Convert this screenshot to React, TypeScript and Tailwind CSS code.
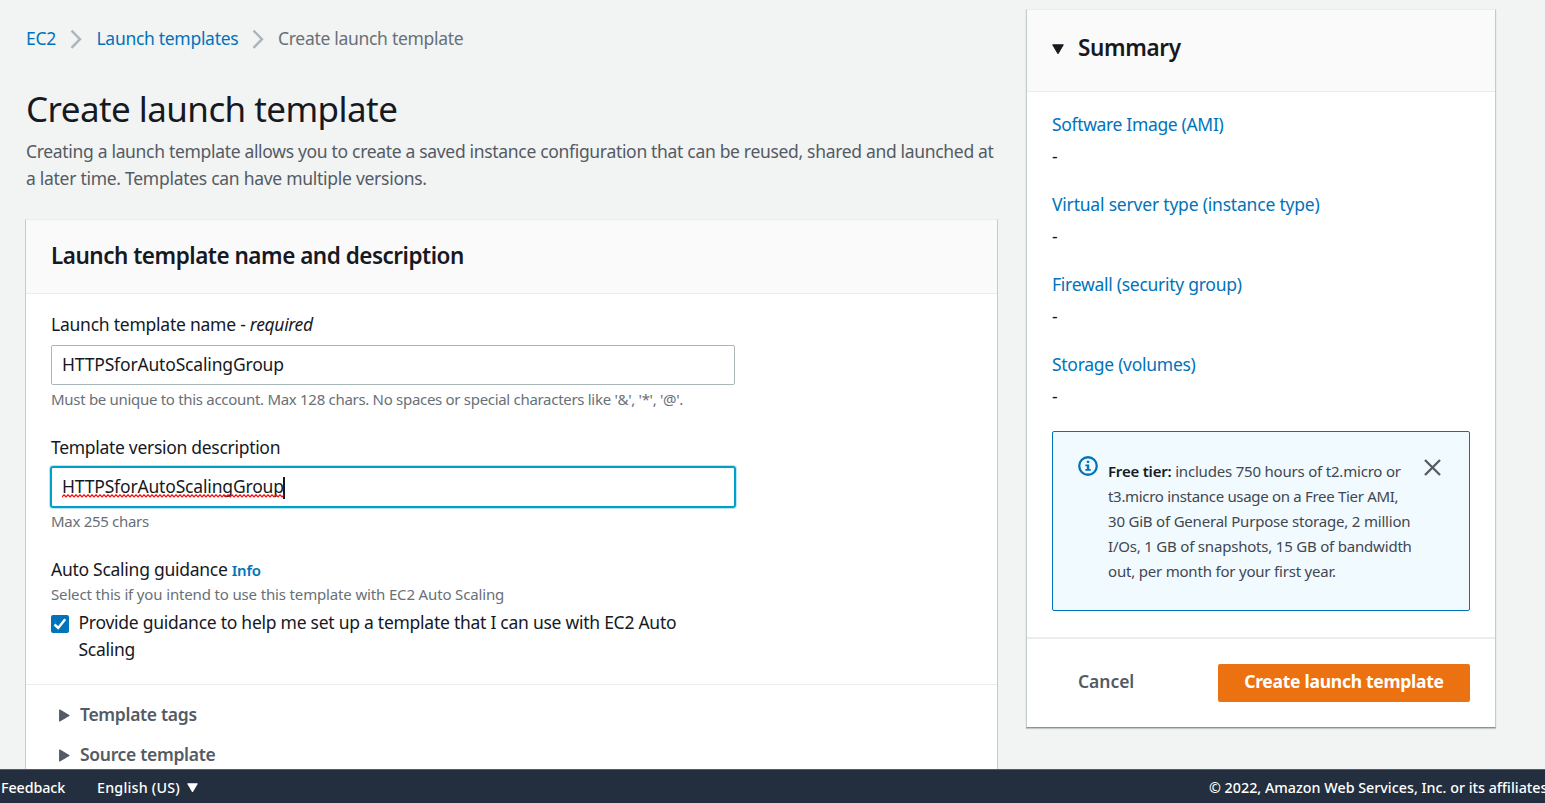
import type { ReactNode } from "react";

function Chevron() {
  return (
    <svg width="13" height="20" viewBox="0 0 13 20" fill="none" stroke="#aab7b8" strokeWidth="2.4">
      <path d="M1.5 1.6 10 10.2 1.5 18.8" />
    </svg>
  );
}

function CaretDown({ className, color }: { className: string; color: string }) {
  return (
    <svg className={className} viewBox="0 0 12 11" fill={color} stroke={color} strokeLinejoin="round">
      <path d="M.7 .8h10.6L6 9.8z" />
    </svg>
  );
}

function SpellingMark() {
  return (
    <svg className="absolute top-[21px] left-0 h-1 w-full" fill="none" stroke="#f00" strokeWidth="1.3">
      <defs>
        <pattern id="squiggle" width="4" height="4" patternUnits="userSpaceOnUse">
          <path d="M-1 1.9 0 2.9 2 .9 4 2.9 5 1.9" />
        </pattern>
      </defs>
      <rect width="100%" height="4" fill="url(#squiggle)" stroke="none" />
    </svg>
  );
}

function Expander({ children }: { children: ReactNode }) {
  return (
    <div className="flex h-10 items-center">
      <svg className="mt-0.5 mr-2.5 h-[13px] w-[11px] shrink-0" viewBox="0 0 11 13" fill="#545b64" stroke="#545b64" strokeLinejoin="round">
        <path d="M.6 .8v11.4L10.3 6.5z" />
      </svg>
      <span className="font-semibold tracking-[-0.31px] text-[#545b64]">{children}</span>
    </div>
  );
}

const summaryItems = [
  { label: "Software Image (AMI)", tracking: "tracking-[-0.34px]" },
  { label: "Virtual server type (instance type)", tracking: "tracking-[-0.2px]" },
  { label: "Firewall (security group)", tracking: "tracking-[-0.27px]" },
  { label: "Storage (volumes)", tracking: "tracking-[-0.28px]" },
];

function TemplatePanel() {
  return (
    <section className="mt-[27px] -ml-px h-[700px] w-[973px] border border-[#c4cbcb] border-t-[#eaeded] bg-white">
      <header className="flex h-[74px] items-center border-b border-[#eaeded] bg-[#fafafa] px-[25px] pb-px">
        <h2 className="text-[22.5px] leading-7 font-semibold tracking-[-0.49px]">Launch template name and description</h2>
      </header>
      <div className="px-[25px] pt-[17px]">
        <div className="w-[684px]">
          <label className="block tracking-[-0.24px]">
            Launch template name - <em className="tracking-[-0.33px]">required</em>
          </label>
          <div className="mt-[7px] flex h-10 items-center rounded-[2px] border border-[#aab7b8] px-[10px] pb-px tracking-[-0.17px]">
            HTTPSforAutoScalingGroup
          </div>
          <p className="mt-[4px] text-[15px] leading-5 tracking-[-0.3px] text-[#687078]">
            Must be unique to this account. Max 128 chars. No spaces or special characters like '&amp;', '*', '@'.
          </p>
          <label className="mt-[25px] block tracking-[-0.3px]">Template version description</label>
          <div className="-mx-px mt-[5px] flex h-[42px] items-center rounded-[3px] border-2 border-[#00a1c9] px-[10px] pb-px shadow-[0_0_0_1px_#b8e7f2]">
            <span className="relative tracking-[-0.17px]">
              HTTPSforAutoScalingGroup
              <SpellingMark />
            </span>
            <span className="mt-0.5 -ml-px h-[22px] w-0.5 bg-[#16191f]" />
          </div>
          <p className="mt-[3px] text-[15px] leading-5 tracking-[-0.3px] text-[#687078]">Max 255 chars</p>
          <div className="mt-[25px] tracking-[-0.27px]">
            Auto Scaling guidance <span className="text-[15px] font-semibold text-[#0073bb]">Info</span>
          </div>
          <p className="text-[15px] leading-5 tracking-[-0.15px] text-[#687078]">
            Select this if you intend to use this template with EC2 Auto Scaling
          </p>
          <div className="mt-[5px] flex">
            <span className="mt-[6px] flex size-[18px] shrink-0 items-center justify-center rounded-[2px] bg-[#0073bb]">
              <svg width="14" height="14" viewBox="0 0 14 14" fill="none" stroke="#fff" strokeWidth="2.5">
                <path d="M1.5 7.5 5.2 11 12.2 2.3" />
              </svg>
            </span>
            <p className="ml-[9.5px] w-[610px] tracking-[-0.26px]">
              Provide guidance to help me set up a template that I can use with EC2 Auto Scaling
            </p>
          </div>
        </div>
      </div>
      <div className="mt-[21px] border-t border-[#eaeded] pt-[9.5px] pl-[33px]">
        <Expander>Template tags</Expander>
        <Expander>Source template</Expander>
      </div>
    </section>
  );
}

function SummaryPanel() {
  return (
    <aside className="mt-[9px] h-[719px] w-[470px] shrink-0 border border-[#c4cbcb] border-t-[#eaeded] border-b-[#879596] bg-white shadow-[0_1px_1px_rgba(0,28,36,0.2)]">
      <header className="flex h-[82px] items-center border-b border-[#eaeded] bg-[#fafafa] px-[25px] pb-[5px]">
        <CaretDown className="mt-0.5 mr-[14px] h-[11px] w-3" color="#16191f" />
        <h2 className="text-[22.5px] leading-7 font-semibold tracking-[-0.35px]">Summary</h2>
      </header>
      <div className="px-[25px] pt-[19px]">
        {summaryItems.map(({ label, tracking }) => (
          <div key={label} className="h-20">
            <a className={`block text-[#0073bb] ${tracking}`}>{label}</a>
            <div className="mt-[5px]">-</div>
          </div>
        ))}
        <div className="flex h-[180px] rounded-[2px] border border-[#0073bb] bg-[#f1faff] pt-6 pl-[25px]">
          <svg className="shrink-0" width="20" height="20" viewBox="0 0 21 21" fill="none">
            <circle cx="10.5" cy="10.5" r="9.2" stroke="#0073bb" strokeWidth="2.4" />
            <path d="M9.3 5h2.5v2.3H9.3zM7.7 8.8h4.1v4.8h1.6v1.9H7.7v-1.9h1.6v-2.9H7.7z" fill="#0073bb" />
          </svg>
          <p className="mt-[3px] ml-[10px] w-[316px] shrink-0 text-[15px] leading-[25px] tracking-[-0.2px] whitespace-nowrap text-[#414750]">
            <strong className="font-semibold tracking-[-0.2px] text-[#16191f]">Free tier:</strong> includes 750 hours of t2.micro or
            <br />
            <span className="tracking-[-0.31px]">t3.micro instance usage on a Free Tier AMI,</span>
            <br />
            30 GiB of General Purpose storage, 2 million
            <br />
            I/Os, 1 GB of snapshots, 15 GB of bandwidth
            <br />
            out, per month for your first year.
          </p>
          <svg className="mt-[3px] shrink-0" width="17" height="17" viewBox="0 0 17 17" stroke="#545b64" strokeWidth="2.3">
            <path d="M1 1l15 15M16 1 1 16" />
          </svg>
        </div>
      </div>
      <footer className="mt-[26px] flex items-start justify-between border-t-2 border-[#eaeded] pt-[25px] pr-[25px] pl-[51px]">
        <button className="h-[35px] font-semibold tracking-[-0.05px] text-[#545b64]">Cancel</button>
        <button className="h-[38px] w-[252px] rounded-[2px] bg-[#ec7211] pb-[3px] font-bold tracking-[-0.27px] text-white">
          Create launch template
        </button>
      </footer>
    </aside>
  );
}

export default function App() {
  return (
    <div className="flex h-[803px] w-[1545px] flex-col overflow-hidden bg-[#f2f3f3] font-['Noto_Sans',sans-serif] text-[17.5px] leading-[27px] text-[#16191f]">
      <main className="flex h-[769px] shrink-0 overflow-hidden">
        <div className="w-[1026px] shrink-0 pt-[25px] pl-[26px]">
          <nav className="flex h-[27px] items-center text-[#0073bb]">
            <a className="w-11 tracking-[-0.25px]">EC2</a>
            <Chevron />
            <a className="ml-[13.5px] w-[155px] tracking-[-0.3px]">Launch templates</a>
            <Chevron />
            <span className="ml-[13.5px] tracking-[-0.3px] text-[#687078]">Create launch template</span>
          </nav>
          <h1 className="mt-[34px] text-[35px] leading-[46px] tracking-[-0.57px]">Create launch template</h1>
          <p className="mt-[6px] whitespace-nowrap text-[#545b64]">
            <span className="tracking-[-0.32px]">
              Creating a launch template allows you to create a saved instance configuration that can be reused, shared and launched at
            </span>
            <br />
            <span className="tracking-[-0.28px]">a later time. Templates can have multiple versions.</span>
          </p>
          <TemplatePanel />
        </div>
        <SummaryPanel />
      </main>
      <footer className="flex h-[34px] shrink-0 items-center border-t border-[#545b64] bg-[#232f3e] pt-0.5 pl-px text-[14.3px] font-medium whitespace-nowrap text-white">
        <span className="w-[96px] tracking-[-0.1px]">Feedback</span>
        <span className="tracking-[0.2px]">English (US)</span>
        <CaretDown className="ml-[7px] h-[10px] w-[11px] shrink-0" color="#fff" />
        <span className="ml-auto w-[336px] shrink-0">© 2022, Amazon Web Services, Inc. or its affiliates</span>
      </footer>
    </div>
  );
}
